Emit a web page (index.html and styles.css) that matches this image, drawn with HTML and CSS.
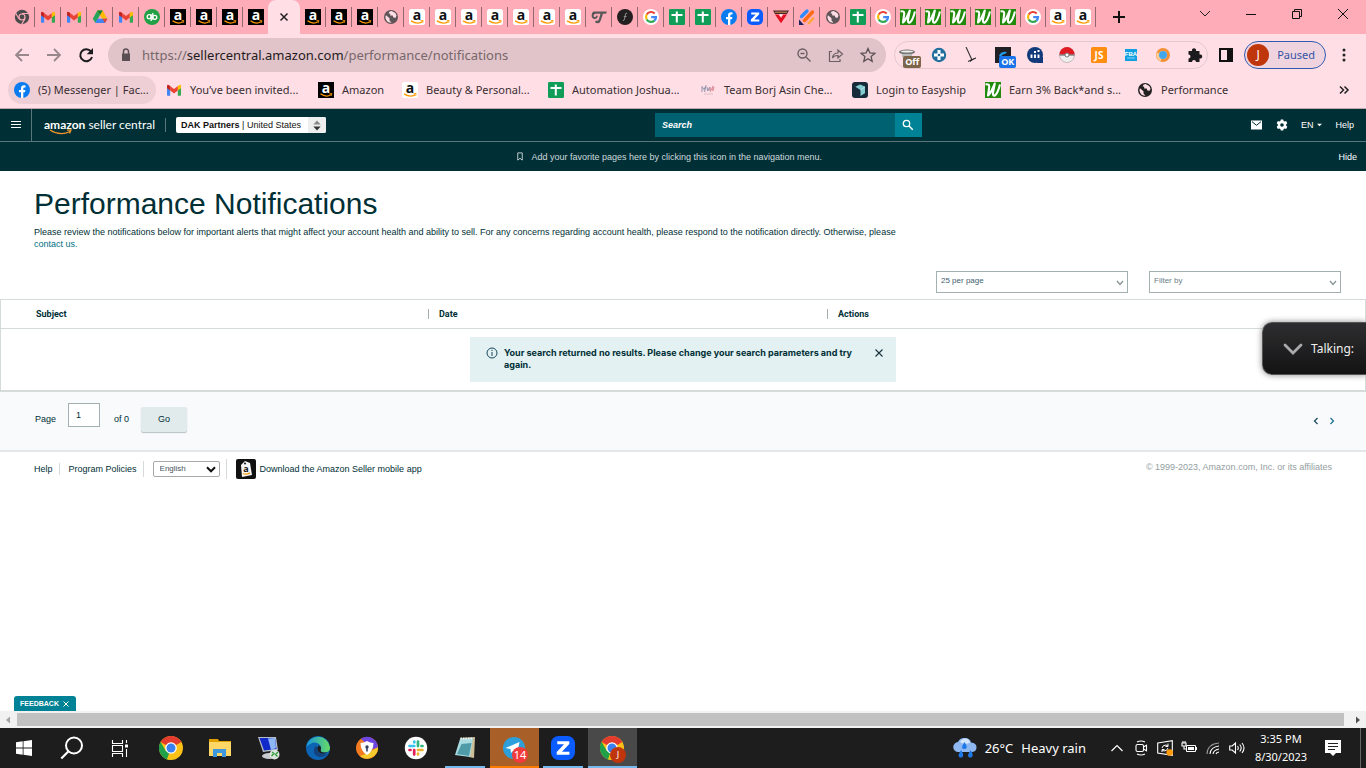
FILE: index.html
```html
<!DOCTYPE html>
<html lang="en">
<head>
<meta charset="utf-8">
<title>Performance Notifications</title>
<link rel="stylesheet" href="styles.css">
</head>
<body>
<svg class="defs" aria-hidden="true">
  <symbol id="chromegray" viewBox="0 0 16 16"><circle cx="8" cy="8" r="7.2" fill="#4a4a4d"/><circle cx="8" cy="8" r="3.6" fill="#ffacb9"/><circle cx="8" cy="8" r="2.4" fill="#4a4a4d"/><path d="M8 4.5h7M5 9.8 1.6 4M11 9.8 7.6 15.4" stroke="#ffacb9" stroke-width="1.1"/></symbol>
  <symbol id="gmail" viewBox="0 0 16 16"><path d="M1 4.5V13q0 .8.8.8H4.200V6.500z" fill="#4285f4"/><path d="M15 4.500V13q0 .8-.8.8h-2.400V6.500z" fill="#34a853"/><path d="M4.200 8.500V4L8 6.900 11.800 4v4.500L8 11.400z" fill="#ea4335"/><path d="M1 4.200Q1 2 3.200 3.200l1 .8v4.500L1 6.200z" fill="#c5221f"/><path d="M15 4.200Q15 2 12.800 3.200l-1 .8v4.500L15 6.200z" fill="#fbbc04"/></symbol>
  <symbol id="drive" viewBox="0 0 16 16"><path d="M5.300 1.500h5.400L3.500 14 .8 9.700z" fill="#25a55a"/><path d="M5.300 1.500h5.400l4.700 8.200h-5.200z" fill="#ffba00"/><path d="M5.300 1.500h5.400L8 6z" fill="#14803c"/><path d="M5.500 9.700h9.900L13 14H3.200z" fill="#4285f4"/><path d="m15.400 9.700-2.500 4.200-2.600-4.200z" fill="#ea4335"/></symbol>
  <symbol id="qb" viewBox="0 0 16 16"><circle cx="8" cy="8" r="8" fill="#22a045"/><g fill="none" stroke="#fff" stroke-width="1.300"><circle cx="5.200" cy="7.700" r="2"/><circle cx="10.800" cy="8.300" r="2"/><path d="M7.200 5.200v6.800M8.800 4v6.800"/></g></symbol>
  <symbol id="amzb" viewBox="0 0 16 16"><path fill="#000" d="M0 0h16v16H0z"/><text x="8" y="10.600" text-anchor="middle" class="logo-a" fill="#fff">a</text><path d="M2.500 11.800q5.500 4 10.500 1" fill="none" stroke="#f90" stroke-width="1.300"/><path d="m11.500 11.800 2.300-.3-.4 2.200" fill="none" stroke="#f90" stroke-width=".9"/></symbol>
  <symbol id="amzw" viewBox="0 0 16 16"><rect width="16" height="16" rx="2.500" fill="#fff"/><text x="8" y="10.600" text-anchor="middle" class="logo-a" fill="#111">a</text><path d="M2 11.800q6 4 11 1" fill="none" stroke="#f90" stroke-width="1.400"/><path d="m11.500 11.800 2.600-.3-.4 2.200" fill="none" stroke="#f90" stroke-width="1"/></symbol>
  <symbol id="globe" viewBox="0 0 16 16"><circle cx="8" cy="8" r="7" fill="currentColor"/><path d="M3 6.300 6.500 9.300v2.200l2 2.200Q3 14 2.400 8zM6.700 2.400l1.800-.3L12.300 4l1.200 2.500-.8 2.200-2.300-.3-.7-1.800H7.200V4.800l-1.700-.5z" fill="#ffdfe5"/></symbol>
  <symbol id="gt" viewBox="0 0 16 16"><path d="M2.500 2.500H16l-1 2.200h-3L9.800 11.500q-.8 2.700-3.300 2.700-1.800 0-2.500-1.200l1-1.600q2 1.200 2.800-1L9.500 4.700H4.800Q2.500 5 2.600 7q.2 1.300 1.700 1 1-.4.900-1.500l1.600.2Q6.500 9.900 3.800 9.900.6 9.800.6 6.700.6 3.500 2.500 2.500z" fill="#595959"/></symbol>
  <symbol id="fdark" viewBox="0 0 16 16"><circle cx="8" cy="8" r="8" fill="#231f20"/><path d="M10.200 4.200Q8.700 3.400 8.300 6L7.500 10q-.5 2-1.700 1.600M6.800 7.500h2.700" fill="none" stroke="#999" stroke-width=".9"/></symbol>
  <symbol id="google" viewBox="0 0 16 16"><circle cx="8" cy="8" r="8" fill="#fff"/><g fill="none" stroke-width="2.200"><path d="M11.700 4.600A5 5 0 0 0 3.700 5.500" stroke="#ea4335"/><path d="M3.700 5.500a5 5 0 0 0 0 5" stroke="#fbbc05"/><path d="M3.700 10.500a5 5 0 0 0 7.700 1.100" stroke="#34a853"/><path d="M11.400 11.600A5 5 0 0 0 13 8.100H8.200" stroke="#4285f4"/></g></symbol>
  <symbol id="sheets" viewBox="0 0 16 16"><rect width="16" height="16" rx="1.300" fill="#0f9d58"/><path d="M6.800 2.500h2v11h-2zM2.500 5h11v2h-11z" fill="#fff"/></symbol>
  <symbol id="fb" viewBox="0 0 16 16"><circle cx="8" cy="8" r="8" fill="#0a7cf0"/><path d="M7 16v-5.700H5V8h2V6.400Q7 3.300 10 3.300l1.500.2v1.900h-1Q9.300 5.400 9.300 6.600V8h2.100l-.4 2.300H9.300V16z" fill="#fff"/></symbol>
  <symbol id="zoom" viewBox="0 0 16 16"><rect width="16" height="16" rx="5" fill="#0b5cff"/><path d="M4.200 3.500h8v1.800l-4.900 5.200h5v2H3.800v-1.900l4.900-5.100H4.200z" fill="#fff"/></symbol>
  <symbol id="redtri" viewBox="0 0 16 16"><path d="M0 1.500h16l-2 3.500H2z" fill="#48232a"/><path d="m2 5.500 6 8.800 6-8.800h-3.500L8 9 5.500 5.500z" fill="#e40f20"/><path d="M6.500 5.500h3L8 7.500z" fill="#fff"/><path d="M2 3.200h12" stroke="#f2b75b" stroke-width=".8"/></symbol>
  <symbol id="stripes" viewBox="0 0 16 16"><path d="m5.500 11.500 8-8.500" stroke="#ff6b12" stroke-width="3.400" stroke-linecap="round"/><path d="M2.500 7.500 8 2" stroke="#2c8bff" stroke-width="3.200" stroke-linecap="round"/><path d="m10 14 4-4.500" stroke="#ffa63d" stroke-width="2.600" stroke-linecap="round"/><path d="M0 10.500 5 16H0z" fill="#182060"/></symbol>
  <symbol id="wgreen" viewBox="0 0 16 16"><path d="M0 0h16v16H0z" fill="#218a0c"/><path d="M.5 2.500Q4.500 1.500 4.200 5L3 13.500Q6 11 9.800 1.500L8 10.500q-.4 3.700 1.900 3Q12.500 12 15 2.500" fill="none" stroke="#fff" stroke-width="2.100" stroke-linejoin="round"/></symbol>
  <symbol id="easy" viewBox="0 0 16 16"><rect width="16" height="16" rx="3" fill="#182b3b"/><path d="M3.300 4.700 8 2.500l5 2v6.800L8.500 14V8z" fill="#82cbd0"/><path d="m8.500 8 4.500-3" stroke="#b6e4e5"/></symbol>
  <symbol id="team" viewBox="0 0 16 16"><path d="M2 10V4.500l2 3 2-4L4.500 10M7 5l.7 4 2-4 .5 4" fill="none" stroke="#8f94ac"/><path d="m9.700 5 .7 4.500L13 4l-.3 5 1.500-4" fill="none" stroke="#dc8b98"/><path d="M4 12h9" stroke="#cda9b1" stroke-width=".6"/></symbol>
  <symbol id="chrome" viewBox="0 0 24 24"><circle cx="12" cy="12" r="12" fill="#fbc116"/><path d="M12 12 1.600 6A12 12 0 0 1 22.400 6z" fill="#e33b2e"/><path d="M12 12v12A12 12 0 0 1 1.600 6l5.200 9z" fill="#21a04a"/><path d="M12 12 17.200 15 12 24q-3 0-4-.7z" fill="#fbc116"/><circle cx="12" cy="12" r="5.800" fill="#fff"/><circle cx="12" cy="12" r="4.500" fill="#3a80ee"/></symbol>
</svg>

<header class="browser">
  <div class="tabs">
    <button class="tab" aria-label="Tab"><svg><use href="#chromegray"/></svg></button>
    <button class="tab" aria-label="Gmail"><svg><use href="#gmail"/></svg></button>
    <button class="tab" aria-label="Gmail"><svg><use href="#gmail"/></svg></button>
    <button class="tab" aria-label="Drive"><svg><use href="#drive"/></svg></button>
    <button class="tab" aria-label="Gmail"><svg><use href="#gmail"/></svg></button>
    <button class="tab" aria-label="QuickBooks"><svg><use href="#qb"/></svg></button>
    <button class="tab" aria-label="Amazon"><svg><use href="#amzb"/></svg></button>
    <button class="tab" aria-label="Amazon"><svg><use href="#amzb"/></svg></button>
    <button class="tab" aria-label="Amazon"><svg><use href="#amzb"/></svg></button>
    <button class="tab before-active" aria-label="Amazon"><svg><use href="#amzb"/></svg></button>
    <button class="tab active" aria-label="Close tab"><svg viewBox="0 0 16 16"><path d="m4.500 4.500 7 7m0-7-7 7" stroke="#222" stroke-width="1.500"/></svg></button>
    <button class="tab" aria-label="Amazon"><svg><use href="#amzb"/></svg></button>
    <button class="tab" aria-label="Amazon"><svg><use href="#amzb"/></svg></button>
    <button class="tab" aria-label="Amazon"><svg><use href="#amzb"/></svg></button>
    <button class="tab" aria-label="Site"><svg><use href="#globe"/></svg></button>
    <button class="tab" aria-label="Amazon"><svg><use href="#amzw"/></svg></button>
    <button class="tab" aria-label="Amazon"><svg><use href="#amzw"/></svg></button>
    <button class="tab" aria-label="Amazon"><svg><use href="#amzw"/></svg></button>
    <button class="tab" aria-label="Amazon"><svg><use href="#amzw"/></svg></button>
    <button class="tab" aria-label="Amazon"><svg><use href="#amzw"/></svg></button>
    <button class="tab" aria-label="Amazon"><svg><use href="#amzw"/></svg></button>
    <button class="tab" aria-label="Amazon"><svg><use href="#amzw"/></svg></button>
    <button class="tab" aria-label="Site"><svg><use href="#gt"/></svg></button>
    <button class="tab" aria-label="Site"><svg><use href="#fdark"/></svg></button>
    <button class="tab" aria-label="Google"><svg><use href="#google"/></svg></button>
    <button class="tab" aria-label="Sheets"><svg><use href="#sheets"/></svg></button>
    <button class="tab" aria-label="Sheets"><svg><use href="#sheets"/></svg></button>
    <button class="tab" aria-label="Facebook"><svg><use href="#fb"/></svg></button>
    <button class="tab" aria-label="Zoom"><svg><use href="#zoom"/></svg></button>
    <button class="tab" aria-label="Site"><svg><use href="#redtri"/></svg></button>
    <button class="tab" aria-label="Site"><svg><use href="#stripes"/></svg></button>
    <button class="tab" aria-label="Site"><svg><use href="#globe"/></svg></button>
    <button class="tab narrow" aria-label="Sheets"><svg><use href="#sheets"/></svg></button>
    <button class="tab narrow" aria-label="Google"><svg><use href="#google"/></svg></button>
    <button class="tab narrow" aria-label="Site"><svg><use href="#wgreen"/></svg></button>
    <button class="tab narrow" aria-label="Site"><svg><use href="#wgreen"/></svg></button>
    <button class="tab narrow" aria-label="Site"><svg><use href="#wgreen"/></svg></button>
    <button class="tab narrow" aria-label="Site"><svg><use href="#wgreen"/></svg></button>
    <button class="tab narrow" aria-label="Site"><svg><use href="#wgreen"/></svg></button>
    <button class="tab narrow" aria-label="Google"><svg><use href="#google"/></svg></button>
    <button class="tab narrow" aria-label="Amazon"><svg><use href="#amzw"/></svg></button>
    <button class="tab narrow" aria-label="Amazon"><svg><use href="#amzw"/></svg></button>
    <button class="newtab" aria-label="New tab"><svg viewBox="0 0 16 16"><path d="M8 2v12M2 8h12" stroke="#111" stroke-width="2"/></svg></button>
    <div class="window-buttons">
      <button aria-label="Search tabs"><svg viewBox="0 0 16 16"><path d="m3 5 5 5 5-5" fill="none" stroke="#222"/></svg></button>
      <button aria-label="Minimize"><svg viewBox="0 0 16 16"><path d="M3 8.500h10" stroke="#111"/></svg></button>
      <button aria-label="Restore"><svg viewBox="0 0 16 16"><path d="M3.500 5.500h7v7h-7zM5.500 5V3.500h7v7H11" fill="none" stroke="#111"/></svg></button>
      <button aria-label="Close"><svg viewBox="0 0 16 16"><path d="m3 3 10 10m0-10L3 13" stroke="#111"/></svg></button>
    </div>
  </div>

  <div class="toolbar">
    <div class="nav-buttons">
      <button aria-label="Back"><svg viewBox="0 0 16 16"><path d="M15 8H2m6-6L2 8l6 6" fill="none" stroke="#98878b" stroke-width="1.800"/></svg></button>
      <button aria-label="Forward"><svg viewBox="0 0 16 16"><path d="M1 8h13M8 2l6 6-6 6" fill="none" stroke="#98878b" stroke-width="1.800"/></svg></button>
      <button aria-label="Reload"><svg viewBox="0 0 16 16"><path d="M13 4.500A6 6 0 1 0 14 10" fill="none" stroke="#1b1b1d" stroke-width="2"/><path d="M15 1v6.300H8.700z" fill="#1b1b1d"/></svg></button>
    </div>
    <div class="omnibox">
      <svg viewBox="0 0 16 16"><path d="M4 6.500h8V14H4z" fill="#5a5054"/><path d="M5.500 7V4.500a2.500 2.500 0 0 1 5 0V7" fill="none" stroke="#5a5054" stroke-width="1.500"/></svg>
      <span class="url">https://<b>sellercentral.amazon.com</b>/performance/notifications</span>
      <button aria-label="Zoom"><svg viewBox="0 0 16 16"><g fill="none" stroke="#6a5e62" stroke-width="1.400"><circle cx="6.500" cy="6.500" r="4.500"/><path d="m10 10 4.500 4.500M4.500 6.500h4"/></g></svg></button>
      <button aria-label="Share"><svg viewBox="0 0 16 16"><path d="M4 4.500H1.500v10H12V12M4.500 11q.5-5 5.500-5V3l4.500 4L10 11V8.500q-4-.2-5.500 2.500z" fill="none" stroke="#6a5e62" stroke-width="1.200"/></svg></button>
      <button aria-label="Bookmark"><svg viewBox="0 0 16 16"><path d="m8 1.500 1.900 4.500 4.900.4-3.700 3.200 1.100 4.800L8 11.800l-4.200 2.600 1.100-4.800L1.200 6.400 6.100 6z" fill="none" stroke="#5a5054" stroke-width="1.300"/></svg></button>
    </div>
    <div class="extensions">
      <button aria-label="Extension"><svg viewBox="0 0 16 16"><ellipse cx="8" cy="5" rx="8" ry="2.500" fill="#777"/><ellipse cx="8" cy="4.500" rx="6" ry="1" fill="#eee"/><path d="M3 7h10v3H3z" fill="#bbb"/></svg><span class="tag off">Off</span></button>
      <button aria-label="Extension"><svg viewBox="0 0 16 16"><circle cx="8" cy="8" r="7.200" fill="#226f9e"/><path d="M6.500 3h3v3.500H13v3H9.500V13h-3V9.500H3v-3h3.500z" fill="#fff"/><circle cx="8" cy="8" r="1.300" fill="#226f9e"/></svg></button>
      <button aria-label="Extension"><svg viewBox="0 0 16 16"><path d="m3 0 6 13M5 14.500l8-3.500" fill="none" stroke="#333" stroke-width="1.100"/><path d="m7 13 6-2.500-6 4.500z" fill="#222"/></svg></button>
      <button aria-label="Extension"><svg viewBox="0 0 16 16"><path d="M0 0h16v16H0z" fill="#202024"/><path d="M4 9q2-5 8-4l-2 2q-3 0-4 3" fill="#209be8"/></svg><span class="tag ok">OK</span></button>
      <button aria-label="Extension"><svg viewBox="0 0 16 16"><circle cx="8" cy="8" r="8" fill="#123a7a"/><path d="M10 10h6v6h-6z" fill="#123a7a"/><path d="M4.500 7.500V11M8 7.500V11m3.500-3.500V11" stroke="#fff" stroke-width="1.900"/><path d="M7 5h2m1.500-1h2" stroke="#fff" stroke-width="1.800"/></svg></button>
      <button aria-label="Extension"><svg viewBox="0 0 16 16"><circle cx="8" cy="8" r="7.500" fill="#eee" stroke="#c9b7bb"/><path d="M.5 7.500a7.500 7.500 0 0 1 15 0z" fill="#e01a22"/><path d="M.5 8h15" stroke="#555"/><circle cx="8" cy="8" r="2" fill="#fff" stroke="#777"/></svg></button>
      <button aria-label="JS"><svg viewBox="0 0 16 16"><rect width="16" height="16" rx="1.500" fill="#ff8d12"/><text x="8" y="12" text-anchor="middle" class="ext-js">JS</text></svg></button>
      <button aria-label="FBA"><svg viewBox="0 0 16 16"><path d="M2 2h12v12H2z" fill="#109fe0"/><text x="8" y="9" text-anchor="middle" class="ext-fba">FBA</text><path d="M4 11h8" stroke="#8cd4f4"/></svg></button>
      <button aria-label="Extension"><svg viewBox="0 0 16 16"><circle cx="8" cy="8" r="5.500" fill="none" stroke="#f69035" stroke-width="3"/><path d="M3 6a5.500 5.500 0 0 0 3 7" fill="none" stroke="#ffcf9a" stroke-width="2.500"/><circle cx="8" cy="8" r="4" fill="#42a6ea"/></svg></button>
      <button aria-label="Extensions"><svg viewBox="0 0 16 16"><path d="M1.500 4H5a2.100 2.100 0 1 1 4 0h3.500v3.500a2.100 2.100 0 1 1 0 4V15H9a2 2 0 0 0-4 0H1.500v-3.500a2 2 0 0 0 0-4z" fill="#1b1b1d"/></svg></button>
    </div>
    <button class="side-panel" aria-label="Side panel"><svg viewBox="0 0 16 16"><path d="M2 2h12v12H2z" fill="none" stroke="#111" stroke-width="2"/><path d="M9 2h5v12H9z" fill="#111"/></svg></button>
    <button class="profile"><span class="avatar">J</span>Paused</button>
    <button class="menu" aria-label="Menu"><svg viewBox="0 0 16 16"><g fill="#222"><circle cx="8" cy="3" r="1.500"/><circle cx="8" cy="8" r="1.500"/><circle cx="8" cy="13" r="1.500"/></g></svg></button>
  </div>

  <nav class="bookmarks">
    <a class="on" href="#"><svg><use href="#fb"/></svg>(5) Messenger | Fac...</a>
    <a href="#"><svg><use href="#gmail"/></svg>You’ve been invited...</a>
    <a class="short" href="#"><svg><use href="#amzb"/></svg>Amazon</a>
    <a class="long" href="#"><svg><use href="#amzw"/></svg>Beauty &amp; Personal...</a>
    <a href="#"><svg><use href="#sheets"/></svg>Automation Joshua...</a>
    <a href="#"><svg><use href="#team"/></svg>Team Borj Asin Che...</a>
    <a class="medium" href="#"><svg><use href="#easy"/></svg>Login to Easyship</a>
    <a href="#"><svg><use href="#wgreen"/></svg>Earn 3% Back*and s...</a>
    <a class="medium" href="#"><svg class="dark"><use href="#globe"/></svg>Performance</a>
    <button class="more" aria-label="More bookmarks"><svg viewBox="0 0 16 16"><path d="m4 4.500 3.500 3.500L4 11.500M8.500 4.500 12 8l-3.500 3.500" fill="none" stroke="#222" stroke-width="1.500"/></svg></button>
  </nav>
</header>

<div class="page">
  <div class="sc-nav">
    <div class="sc-left">
      <button class="burger" aria-label="Menu"><svg viewBox="0 0 16 16"><path d="M3 4.500h10M3 7.500h10M3 10.500h10" stroke="#fff" stroke-width="1.100"/></svg></button>
      <a class="brand" href="#"><b>amazon</b> seller central<svg viewBox="0 0 24 7"><path d="M1 1q10 6.500 20 1.500M18 1.200l4-.2-1.500 3.500" fill="none" stroke="#f0962a" stroke-width="1.300"/></svg></a>
      <button class="account"><span><b>DAK Partners</b> | United States</span><i><svg viewBox="0 0 8 12"><path d="m0 5 4-4.500L8 5z" fill="#888"/><path d="m0 7 4 4.500L8 7z" fill="#333"/></svg></i></button>
    </div>
    <form class="search"><input type="text" placeholder="Search" aria-label="Search"><button type="button" aria-label="Search"><svg viewBox="0 0 16 16"><circle cx="6.500" cy="6.500" r="3.200" fill="none" stroke="#fff" stroke-width="1.300"/><path d="m8.800 8.800 4 4" stroke="#fff" stroke-width="1.500"/></svg></button></form>
    <div class="sc-right">
      <button aria-label="Messages"><svg viewBox="0 0 12 12"><path d="M0 1.500h11v9H0z" fill="#fff"/><path d="m1 2.700 4.500 3.600L10 2.700" fill="none" stroke="#002f36"/></svg></button>
      <button aria-label="Settings"><svg viewBox="0 0 12 12"><path fill="#fff" fill-rule="evenodd" d="M4.800.5h2.400l.4 1.600.9.500 1.600-.5 1.200 2.100-1.200 1.200v1.200l1.200 1.200-1.200 2.100-1.600-.5-.9.500-.4 1.600H4.800l-.4-1.600-.9-.5-1.600.5L.7 7.800l1.200-1.200V5.400L.7 4.200l1.200-2.100 1.600.5.9-.5zM6 4.200a1.800 1.800 0 1 0 0 3.600 1.800 1.800 0 0 0 0-3.600z"/></svg></button>
      <button class="lang">EN <svg viewBox="0 0 6 4"><path d="M0 .5h6l-3 3z" fill="#fff"/></svg></button>
      <a href="#">Help</a>
    </div>
  </div>
  <div class="favorites">
    <p><svg viewBox="0 0 8 10"><path d="M1.500 1h5v8L4 7 1.500 9z" fill="none" stroke="#cfdadb"/></svg>Add your favorite pages here by clicking this icon in the navigation menu.</p>
    <a href="#">Hide</a>
  </div>

  <main>
    <section class="intro">
      <h1>Performance Notifications</h1>
      <p>Please review the notifications below for important alerts that might affect your account health and ability to sell. For any concerns regarding account health, please respond to the notification directly. Otherwise, please <a href="#">contact us.</a></p>
    </section>
    <div class="filters">
      <div class="pick"><select class="chosen" aria-label="Rows per page"><option>25 per page</option></select><svg viewBox="0 0 8 6"><path d="m1 1 3 3.500L7 1" fill="none" stroke="#879596" stroke-width="1.300"/></svg></div>
      <div class="pick"><select aria-label="Filter by"><option>Filter by</option></select><svg viewBox="0 0 8 6"><path d="m1 1 3 3.500L7 1" fill="none" stroke="#879596" stroke-width="1.300"/></svg></div>
    </div>
    <table class="results">
      <thead><tr><th class="subject">Subject</th><th class="date"><span>Date</span></th><th><span>Actions</span></th></tr></thead>
      <tbody><tr><td colspan="3">
        <div class="notice" role="alert">
          <svg viewBox="0 0 12 12"><circle cx="6" cy="6" r="5" fill="none" stroke="#17475b"/><path d="M6 5v4M6 2.800v1.200" stroke="#17475b"/></svg>
          <p>Your search returned no results. Please change your search parameters and try again.</p>
          <button aria-label="Dismiss"><svg viewBox="0 0 12 12"><path d="m2.500 2.500 7 7m0-7-7 7" stroke="#17333b" stroke-width="1.100"/></svg></button>
        </div>
      </td></tr></tbody>
    </table>
    <div class="pager">
      <label for="pg">Page</label><input id="pg" type="text" value="1"><span>of 0</span><button class="go">Go</button>
      <div class="arrows"><button aria-label="Previous"><svg viewBox="0 0 8 8"><path d="M5.500 1 2.500 4l3 3" fill="none" stroke="#17475b" stroke-width="1.200"/></svg></button><button aria-label="Next"><svg viewBox="0 0 8 8"><path d="m2.500 1 3 3-3 3" fill="none" stroke="#17708c" stroke-width="1.200"/></svg></button></div>
    </div>
    <footer class="foot">
      <a href="#">Help</a><a href="#">Program Policies</a>
      <div class="language"><select aria-label="Language"><option>English</option></select><svg viewBox="0 0 10 7"><path d="m1 1.300 4 4 4-4" fill="none" stroke="#111" stroke-width="2"/></svg></div>
      <a href="#" class="app"><svg viewBox="0 0 20 20"><rect width="20" height="20" rx="2" fill="#111"/><path d="m5 6 4-4 5 2 2 12-10 2z" fill="#f5f5f5"/><circle cx="9" cy="4.500" r="1" fill="#111"/><text x="10" y="13" text-anchor="middle" class="logo-app">a</text><path d="M7 14.500q4 1.500 7-.8" fill="none" stroke="#f90" stroke-width="1.100"/></svg>Download the Amazon Seller mobile app</a>
      <small>© 1999-2023, Amazon.com, Inc. or its affiliates</small>
    </footer>
    <button class="feedback">FEEDBACK<svg viewBox="0 0 8 8"><path d="m1.500 1.500 5 5m0-5-5 5" stroke="#fff"/></svg></button>
  </main>
  <div class="talking"><svg viewBox="0 0 20 14"><path d="m2 3 8 8 8-8" fill="none" stroke="#a9a9ab" stroke-width="2.800" stroke-linecap="round"/></svg>Talking:</div>
</div>

<div class="hscroll"><svg viewBox="0 0 16 16"><path d="M10 4.500v7L6 8z" fill="#a3a3a3"/></svg><div class="thumb"></div><svg viewBox="0 0 16 16"><path d="M6 4.500v7L10 8z" fill="#505050"/></svg></div>

<footer class="taskbar">
  <button class="sys" aria-label="Start"><svg viewBox="0 0 24 24"><path d="m4 6.300 6.700-1v6.200H4zM11.500 5.200 20 4v7.500h-8.500zM4 12.500h6.700v6.300L4 17.800zM11.500 12.500H20V20l-8.500-1.200z" fill="#fff"/></svg></button>
  <button class="sys" aria-label="Search"><svg viewBox="0 0 24 24"><circle cx="14" cy="9.500" r="8" fill="none" stroke="#fff" stroke-width="2"/><path d="m8.300 15.500-7 7" stroke="#fff" stroke-width="2.200"/></svg></button>
  <button class="sys" aria-label="Task view"><svg viewBox="0 0 24 24"><path d="M4.500 4v3.500h10V4M4.500 9.500h10v6h-10zM4.500 21v-3.500h10V21M18.500 4v3m0 6v8" fill="none" stroke="#fff" stroke-width="1.100"/><path d="M17 8.500h3v3h-3z" fill="#fff"/></svg></button>
  <button class="app-btn first" aria-label="Chrome"><svg><use href="#chrome"/></svg></button>
  <button class="app-btn" aria-label="Files"><svg viewBox="0 0 24 24"><path d="M1 3h9l1 2h12v5H1z" fill="#e0a000"/><path d="M1 6h22v14H1z" fill="#ffd767"/><path d="M5 13h13v8h-4v-4H9v4H5z" fill="#3f97dd"/></svg></button>
  <button class="app-btn" aria-label="Remote desktop"><svg viewBox="0 0 24 24"><ellipse cx="12" cy="20" rx="7" ry="3" fill="#c9cbd2"/><path d="m1 1 18 0 2 13-15 2z" fill="#b7bdca"/><path d="m2.500 2 15.500 0 1.500 11-12.500 1.500z" fill="#1029c8"/><path d="m11 2.500 7-.5 1 10-5 2z" fill="#8db7f5"/><circle cx="17.500" cy="18.500" r="5" fill="#dde3dd"/><path d="m14.500 20 2.500-2.500L15 16m6 0-2.500 2.500 2 2" fill="none" stroke="#2c9d35" stroke-width="1.300"/></svg></button>
  <button class="app-btn" aria-label="Edge"><svg viewBox="0 0 24 24"><defs><linearGradient id="eg"><stop stop-color="#1696df"/><stop offset="1" stop-color="#68dc62"/></linearGradient></defs><circle cx="12" cy="12" r="12" fill="#0d64b5"/><path d="M.2 11A12 12 0 0 1 24 11.500q0 5-6 5-4 0-3.700-2.500 1.500-3-.8-5.500Q8 3.500.2 11z" fill="url(#eg)"/><path d="M9.500 10q-5 8 4 11 5 0 8.500-3-5 1.500-8.500-1-2-2-1-5z" fill="#13427d"/><path d="M12 9.700q3.500 0 3 3-1 2 .5 3.300 2 .7 6 .5-6 3-9-.8-1.500-2.500-.5-6z" fill="#1c1c1c"/></svg></button>
  <button class="app-btn" aria-label="Secure browser"><svg viewBox="0 0 24 24"><circle cx="12" cy="12" r="11" fill="#f47b20"/><path d="M6 2.700A11 11 0 0 1 23 12l-6 1z" fill="#6d45e0"/><path d="M23 11A11 11 0 0 1 5 20l8-3z" fill="#f5ca2c"/><path d="M12 5q3 2 6.500 2 0 8-6.500 12Q5.500 15 5.500 7 9 7 12 5z" fill="#fff"/><circle cx="12" cy="11" r="1.700" fill="#35405f"/><path d="M11.200 11h1.600v4.500h-1.600z" fill="#35405f"/></svg></button>
  <button class="app-btn" aria-label="Slack"><svg viewBox="0 0 24 24"><circle cx="12" cy="12" r="11.200" fill="#fff"/><g fill="none" stroke-width="2.700" stroke-linecap="round"><path d="M5.500 10h4.800M10.300 5.500v1" stroke="#36c5f0"/><path d="M14 5.500v4.600M18.500 10h-1" stroke="#2eb67d"/><path d="M18.500 14h-4.600M14 18.500v-1" stroke="#ecb22e"/><path d="M10.200 18.500V14M5.500 14h1" stroke="#e01e5a"/></g></svg></button>
  <button class="app-btn running" aria-label="Notepad"><svg viewBox="0 0 24 24"><path d="m7 2 15-1-1 21-5-1z" fill="#cdbf98"/><path d="m7 3 13-1-3 19-15-2z" fill="#a9dbe0"/><path d="m8.500 8 10-1-2.500 13-12-2z" fill="#4f9ba8"/><path d="M7.500 2.500H20" stroke="#e8f1f1" stroke-width="1.800" stroke-dasharray="1.500 1"/></svg></button>
  <button class="app-btn alert" aria-label="Telegram"><svg viewBox="0 0 24 24"><circle cx="12" cy="12" r="11" fill="#2da0dc"/><path d="m3.500 12 14-6-2.500 12-4-3-2 2-.5-4z" fill="#fff"/></svg><span class="count">14</span></button>
  <button class="app-btn running" aria-label="Zoom"><svg><use href="#zoom"/></svg></button>
  <button class="app-btn current" aria-label="Chrome"><svg><use href="#chrome"/></svg><span class="count user">J</span></button>
  <div class="tray">
    <button class="weather"><svg viewBox="0 0 24 24"><path d="M5.500 16a5 5 0 0 1-.5-10Q7 1.500 12 2q5 .2 6 4.500Q24 7 23.500 12q-.5 4-5 4z" fill="#8fb8f0"/><path d="M7 6q2-4 6-3.500 3 .5 4 4-5 3-10-.5z" fill="#d4e5fb"/><path d="M11.500 6q3.500 5 1.500 6.500-3 1.500-4-1 0-2 2.500-5.500zM8 14q3.500 5 1.500 7-3 1.500-4-1 0-2 2.500-6zM17.500 14q3.500 5 1.500 7-3 1.500-4-1 0-2 2.500-6z" fill="#1d78e8"/></svg><span>26°C</span><span>Heavy rain</span></button>
    <button aria-label="Show hidden icons"><svg viewBox="0 0 16 16"><path d="m2.500 11 5.500-5.500 5.500 5.500" fill="none" stroke="#fff" stroke-width="1.200"/></svg></button>
    <button aria-label="Camera"><svg viewBox="0 0 16 16"><g fill="none" stroke="#fff" stroke-width="1.100"><rect x="3" y="4.500" width="7.500" height="7" rx="1.500"/><path d="m10.500 7 3-1.800v5.600l-3-1.800M4 2q4-2 8 0M4 14q4 2 8 0"/></g></svg></button>
    <button aria-label="Sync"><svg viewBox="0 0 16 16"><path d="M.7 3 15.300.7v14.600L.7 13z" fill="none" stroke="#fff" stroke-width="1.100"/><path d="M5 8q.5-3 4-3l2 1m0-2.500V6.500H8.500M11 8q-1 3-4 3l-2-1m0 2V9.500h2.500" fill="none" stroke="#fff"/><circle cx="12.700" cy="12.500" r="3.300" fill="#ff9a08"/></svg></button>
    <button aria-label="Battery"><svg viewBox="0 0 16 16"><path d="M1 3h4v3H1zM2 1v2M4 1v2M3 6v3h2" fill="none" stroke="#fff" stroke-width="1.100"/><path d="M5.500 5.500h9v6h-9z" fill="none" stroke="#fff"/><path d="M7 7h6v3H7zM15 7h1v3h-1z" fill="#fff"/></svg></button>
    <button aria-label="Wi-Fi"><svg viewBox="0 0 16 16"><g fill="none" stroke="#fff" stroke-width="1.100"><path d="M2 14Q2.500 4 14 3" stroke="#999"/><path d="M5 14q.5-7 9-8M8 14q.5-4 6-5M11 14q.5-1.800 3-2"/></g></svg></button>
    <button aria-label="Volume"><svg viewBox="0 0 16 16"><g fill="none" stroke="#fff" stroke-width="1.100"><path d="M.7 6h2.500L6.500 3v10L3.200 10H.7zM8.500 6q1.500 2 0 4M10.700 4.500q3 3.500 0 7M13 3q4 5 0 10"/></g></svg></button>
    <div class="clock"><time>3:35 PM</time><time>8/30/2023</time></div>
    <button class="news" aria-label="Notifications"><svg viewBox="0 0 16 16"><path d="M0 0h16v13h-5l-3 3-3-3H0z" fill="#fff"/><path d="M3 3.500h10M3 6.500h10M3 9.500h7" stroke="#222"/></svg></button>
  </div>
</footer>
</body>
</html>
```
FILE: styles.css
```css
* { box-sizing: border-box; }
body { margin: 0; min-height: 100vh; display: flex; flex-direction: column; font: 9px/12px "Liberation Sans", Arial, sans-serif; color: #002f36; background: #fff; }
button, input, select { font: inherit; color: inherit; margin: 0; padding: 0; border: 0; background: none; border-radius: 0; }
button { display: flex; align-items: center; justify-content: center; flex: none; }
a { color: inherit; text-decoration: none; }
p, h1 { margin: 0; }
svg { width: 16px; height: 16px; flex: none; display: block; }
.defs { position: absolute; width: 0; height: 0; }
.logo-a { font: bold 14px "Open Sans", sans-serif; }
.logo-app { font: bold 9px "Open Sans", sans-serif; fill: #111; }
.ext-js { font: bold 10px "Open Sans", sans-serif; fill: #fff; }
.ext-fba { font: bold 6px "Liberation Sans", sans-serif; fill: #fff; }

/* browser frame */
.browser { font: 11px/16px "Noto Sans", "Segoe UI", sans-serif; color: #3a2e32; background: #ffdfe5; border-bottom: 1px solid #bda9ad; }
.tabs { display: flex; align-items: center; height: 34px; padding-left: 9px; background: #ffacb9; }
.tab { width: 26px; height: 20px; border-right: 1px solid #936870; color: #5f5558; }
.narrow { width: 25px; }
.before-active { width: 25px; border: 0; }
.tab.active { width: 32px; height: 34px; border: 0; border-radius: 8px 8px 0 0; background: #ffdfe5; }
.newtab { width: 46px; }
.window-buttons { display: flex; margin-left: auto; padding-bottom: 6px; }
.window-buttons button { width: 46px; }
.toolbar { display: flex; align-items: center; height: 42px; }
.nav-buttons { display: flex; gap: 16px; padding: 0 14px; }
.omnibox { flex: 1; display: flex; align-items: center; gap: 16px; height: 34px; padding: 0 10px; border-radius: 17px; background: #e1c4c9; }
.url { flex: 1; margin-left: -8px; font-size: 13px; color: #76676b; }
.url b { font-weight: normal; color: #1f1a1c; }
.extensions { display: flex; align-items: center; gap: 16px; height: 28px; margin-left: 8px; padding: 0 4px; border: 1px solid #e3c9ce; border-radius: 14px; }
.extensions button { position: relative; }
.tag { position: absolute; left: 4px; top: 9px; padding: 0 2px; border-radius: 2px; font: bold 9px/12px "Open Sans", sans-serif; color: #fff; }
.off { background: #7d6549; }
.ok { background: #1a73e8; }
.side-panel { margin-left: 10px; }
.profile { gap: 8px; height: 28px; margin: 0 10px; padding: 0 10px 0 2px; border: 1px solid #2f5ab0; border-radius: 14px; background: #efd4e0; color: #3453a4; }
.avatar { width: 22px; height: 22px; border-radius: 50%; background: #bf360c; color: #fff; font-size: 12px; line-height: 22px; }
.menu { margin-right: 14px; }
.bookmarks { display: flex; align-items: center; gap: 4px; height: 32px; padding: 0 14px 4px 8px; }
.bookmarks a { display: flex; align-items: center; gap: 8px; width: 148px; height: 28px; padding: 0 6px; border-radius: 14px; white-space: nowrap; }
.bookmarks .on { background: #eecfd5; }
.bookmarks .short { width: 80px; }
.bookmarks .medium { width: 129px; }
.bookmarks .long { width: 142px; }
.bookmarks .dark { color: #222; }
.more { margin-left: auto; }

/* seller central header */
.page { position: relative; flex: 1; display: flex; flex-direction: column; }
.sc-nav { display: flex; align-items: center; height: 33px; background: #002f36; border-bottom: 1px solid #59777b; color: #fff; }
.sc-left { flex: 47 1 0; display: flex; align-items: center; height: 32px; }
.burger { width: 32px; height: 32px; border-right: 1px solid #59777b; }
.brand { position: relative; margin-left: 12px; padding-right: 10px; border-right: 1px solid #59777b; font: 12px/14px Lato, sans-serif; white-space: nowrap; }
.brand svg { position: absolute; left: 5px; top: 11px; width: 24px; height: 7px; }
.account { margin-left: 10px; height: 16px; border-radius: 2px; background: #fff; color: #111; overflow: hidden; }
.account span { padding: 0 7px 0 5px; }
.account i { width: 18px; height: 16px; display: grid; place-items: center; background: #eee; }
.account svg { width: 8px; height: 11px; }
.search { display: flex; height: 24px; }
.search input { width: 240px; padding: 0 7px; background: #006170; font-style: italic; font-weight: bold; }
.search input::placeholder { color: #fff; opacity: 1; }
.search button { width: 27px; background: #008296; }
.sc-right { flex: 31 1 0; display: flex; align-items: center; justify-content: flex-end; gap: 13px; padding-right: 12px; }
.sc-right svg { width: 12px; height: 12px; }
.lang { gap: 4px; }
.sc-right .lang svg { width: 5px; height: 4px; }
.favorites { display: flex; align-items: center; height: 29px; padding-right: 9px; background: #002f36; color: #fff; }
.favorites p { flex: 1; display: flex; justify-content: center; align-items: center; gap: 7px; color: #cfdadb; }
.favorites svg { width: 8px; height: 9px; }

/* content */
main { position: relative; flex: 1; display: flex; flex-direction: column; }
.intro { max-width: 910px; padding: 16px 0 0 34px; }
h1 { font-size: 30px; line-height: 34px; font-weight: normal; padding-bottom: 5px; }
.intro a { color: #007185; }
.filters { display: flex; justify-content: flex-end; gap: 21px; padding: 21px 25px 6px; }
.pick { position: relative; width: 192px; }
.pick select { appearance: none; display: block; width: 100%; height: 22px; padding: 0 4px 2px; border: 1px solid #a2b0b2; background: #fff; color: #6b8087; font-size: 8px; }
.pick .chosen { color: #43606c; }
.pick svg { position: absolute; right: 4px; top: 9px; width: 8px; height: 6px; pointer-events: none; }
.results { width: 100%; border-collapse: separate; border-spacing: 0; border: 1px solid #d5dbdb; border-bottom-width: 2px; }
.results th { height: 29px; padding: 0; border-bottom: 1px solid #d5dbdb; text-align: left; font-family: Roboto, sans-serif; }
.results th span { display: block; padding-left: 10px; border-left: 1px solid #a2b0b2; line-height: 10px; }
.results .subject { width: 427px; padding-left: 35px; }
.results .date { width: 399px; }
.results td { padding: 8px 0; }
.notice { display: flex; gap: 6px; width: 426px; min-height: 45px; margin: 0 auto; padding: 10px 11px 0 16px; background: #e3f1f2; font-family: Inter, sans-serif; font-weight: bold; }
.notice p { flex: 1; }
.notice svg { width: 12px; height: 12px; }
.notice button { align-self: flex-start; }
.pager { display: flex; align-items: center; height: 60px; padding: 0 30px 4px 35px; background: #f8fafc; border-bottom: 2px solid #e4e7ea; }
.pager input { width: 32px; height: 24px; margin: 0 14px 8px 12px; padding: 0 7px; border: 1px solid #a2b0b2; background: #fff; }
.go { width: 46px; height: 25px; margin-left: 12px; border-radius: 2px; background: #e2ebec; box-shadow: 0 1px 1px #b8c2c3; }
.arrows { display: flex; gap: 8px; margin-left: auto; padding-top: 4px; }
.arrows svg { width: 8px; height: 8px; }
.foot { display: flex; align-items: center; height: 34px; padding: 0 34px; }
.foot a + a, .language, .foot .app { padding-left: 9px; margin-left: 6px; border-left: 1px solid #d5dbdb; }
.language { position: relative; }
.language select { appearance: none; display: block; width: 67px; height: 16px; padding: 0 6px; border: 1px solid #a9a9a9; border-radius: 2px; background: #fff; color: #47545b; font-size: 8px; }
.language svg { position: absolute; right: 4px; top: 5px; width: 10px; height: 7px; pointer-events: none; }
.app { display: flex; align-items: center; gap: 4px; }
.app svg { width: 20px; height: 20px; }
.foot small { margin-left: auto; font-size: 9px; color: #949ea1; padding-bottom: 4px; }
.feedback { position: absolute; left: 14px; bottom: 0; width: 62px; height: 15px; gap: 3px; border-radius: 3px 3px 0 0; background: #008296; color: #fff; font-size: 7px; font-weight: bold; }
.feedback svg { width: 8px; height: 8px; }
.talking { position: absolute; right: 0; top: 213px; display: flex; align-items: center; gap: 8px; height: 53px; padding: 0 12px 0 20px; border: 1px solid #555; border-right: 0; border-radius: 10px 0 0 10px; background: linear-gradient(#2e2e30, #131314); box-shadow: 0 0 6px #888; color: #f0f0f0; font: 12px/16px "Noto Sans", sans-serif; }
.talking svg { width: 20px; height: 14px; }

.hscroll { display: flex; align-items: center; justify-content: space-between; height: 17px; background: #f1f1f1; }
.thumb { flex: 1; height: 13px; margin: 0 6px 0 1px; background: #c1c1c1; }

/* taskbar */
.taskbar { display: flex; height: 40px; background: #1d1d1d; color: #fff; font: 13px/16px "Noto Sans", "Segoe UI", sans-serif; }
.taskbar svg { width: 24px; height: 24px; }
.sys { width: 48px; }
.app-btn { position: relative; width: 49px; padding-right: 1px; }
.first { margin-left: 3px; }
.running::after { content: ""; position: absolute; left: 4px; right: 5px; bottom: 0; height: 2px; background: #76b9ed; }
.alert { background: #a85f28; border-bottom: 2px solid #ff7a00; padding-top: 2px; }
.current { background: #494949; border-bottom: 2px solid #76b9ed; padding-top: 2px; }
.count { position: absolute; left: 22px; top: 19px; width: 16px; height: 16px; border-radius: 50%; background: #f23b3b; font-size: 11px; line-height: 16px; }
.count.user { background: #bf360c; font-size: 9px; }
.tray { display: flex; align-items: center; margin-left: auto; }
.tray button { width: 24px; }
.tray .weather { width: auto; gap: 8px; margin-right: 19px; }
.tray button:not(.weather) svg { width: 16px; height: 16px; }
.clock { display: flex; flex-direction: column; gap: 2px; width: 64px; text-align: center; font-size: 11px; }
.tray .news { width: 40px; margin-right: 7px; }
.tray::after { content: ""; align-self: stretch; width: 5px; border-left: 1px solid #666; }
```
